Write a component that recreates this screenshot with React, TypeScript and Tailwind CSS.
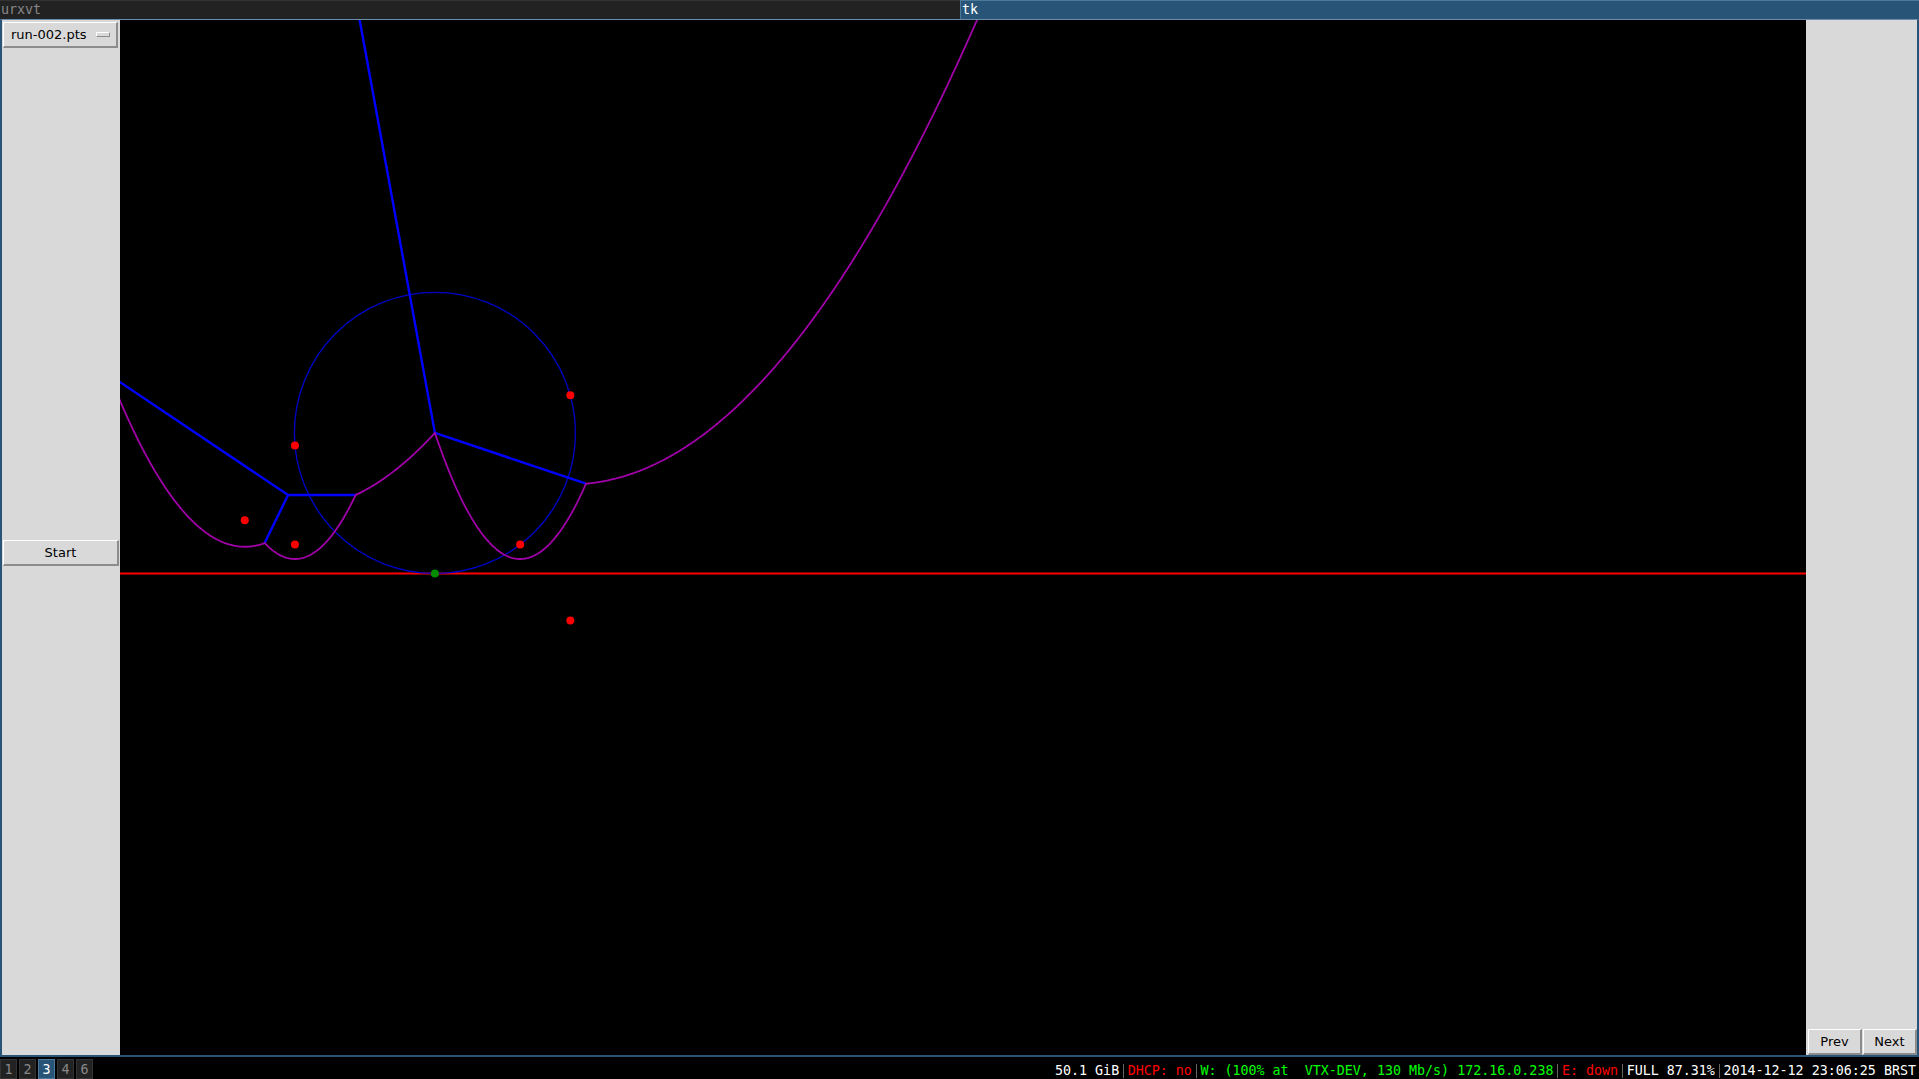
type P = [number, number];

// reference was measured on a 1568px wide copy
const K = 1919 / 1568;
const CX = 120;
const CY = 20;
const CW = 1686;
const CH = 1035;

const pt = (x: number, y: number): P => [x * K - CX, y * K - CY];

const A = pt(241, 364);
const B = pt(425, 445);
const C = pt(466, 323);
const D = pt(241, 445);
const E = pt(200, 425);
const F = pt(466, 507);

const sites = [A, B, C, D, E, F];
const done = [A, B, C, D, E];

function circumcenter(a: P, b: P, c: P): P {
  const d = 2 * (a[0] * (b[1] - c[1]) + b[0] * (c[1] - a[1]) + c[0] * (a[1] - b[1]));
  const a2 = a[0] ** 2 + a[1] ** 2;
  const b2 = b[0] ** 2 + b[1] ** 2;
  const c2 = c[0] ** 2 + c[1] ** 2;
  return [
    (a2 * (b[1] - c[1]) + b2 * (c[1] - a[1]) + c2 * (a[1] - b[1])) / d,
    (a2 * (c[0] - b[0]) + b2 * (a[0] - c[0]) + c2 * (b[0] - a[0])) / d,
  ];
}

const V = circumcenter(A, B, C);
const R = Math.hypot(A[0] - V[0], A[1] - V[1]);
const L = V[1] + R; // sweep line
const W = circumcenter(A, E, D);

const arc = (s: P, x: number) => (L + s[1]) / 2 - (x - s[0]) ** 2 / (2 * (L - s[1]));
const beach = (x: number) => Math.max(...done.map((s) => arc(s, x)));

function breakpoint(s: P, t: P, lo: number, hi: number): P {
  const f = (x: number) => arc(s, x) - arc(t, x);
  const flo = f(lo);
  for (let i = 0; i < 60; i++) {
    const m = (lo + hi) / 2;
    if (f(m) * flo > 0) lo = m;
    else hi = m;
  }
  return [lo, arc(s, lo)];
}

const bpBC = breakpoint(B, C, 455 * K - CX, 520 * K - CX);
const bpDA = breakpoint(D, A, 260 * K - CX, 320 * K - CX);
const bpED = breakpoint(E, D, 205 * K - CX, 232 * K - CX);

// half line along the bisector of s and t, going upward
function ray(from: P, s: P, t: P): P {
  const dx = t[0] - s[0];
  const dy = t[1] - s[1];
  let v: P = [-dy, dx];
  if (v[1] > 0) v = [dy, -dx];
  const n = Math.hypot(v[0], v[1]);
  return [from[0] + (v[0] / n) * 2000, from[1] + (v[1] / n) * 2000];
}

const edges: [P, P][] = [
  [V, ray(V, A, C)],
  [V, bpBC],
  [W, ray(W, A, E)],
  [W, bpDA],
  [W, bpED],
];

const beachXs: number[] = [];
for (let x = -20; x <= 1000; x += 1) beachXs.push(x);
beachXs.push(V[0], bpBC[0], bpDA[0], bpED[0]);
beachXs.sort((a, b) => a - b);
const beachPts = beachXs.map((x) => `${x.toFixed(2)},${beach(x).toFixed(2)}`).join(" ");

const Canvas = () => (
  <div className="h-full w-[1686px] shrink-0 overflow-hidden bg-black">
    <svg width={CW} height={CH} viewBox={`0 0 ${CW} ${CH}`} className="block">
      <line x1={0} y1={L} x2={CW} y2={L} stroke="#ff0000" strokeWidth={2} />
      <circle cx={V[0]} cy={V[1]} r={R} fill="none" stroke="#0000c8" strokeWidth={1.3} />
      {edges.map(([p, q], i) => (
        <line key={i} x1={p[0]} y1={p[1]} x2={q[0]} y2={q[1]} stroke="#0000ff" strokeWidth={2.4} />
      ))}
      <polyline points={beachPts} fill="none" stroke="#a000a8" strokeWidth={1.8} />
      {sites.map(([x, y], i) => (
        <circle key={i} cx={x} cy={y} r={4} fill="#ff0000" />
      ))}
      <circle cx={V[0]} cy={L} r={4} fill="#008c00" />
    </svg>
  </div>
);

const raised = "border-t border-l border-t-white border-l-white border-b-2 border-r-2 border-b-[#8c8c8c] border-r-[#8c8c8c]";
const raisedThin = "border border-t-white border-l-white border-b-[#8c8c8c] border-r-[#8c8c8c]";

const TkButton = ({ label, className }: { label: string; className: string }) => (
  <div className={`flex items-center justify-center bg-[#d9d9d9] text-[13px] text-black ${raised} ${className}`}>
    {label}
  </div>
);

const LeftPanel = () => (
  <div className="flex w-[118px] shrink-0 flex-col bg-[#d9d9d9] font-['DejaVu_Sans',sans-serif]">
    <div className={`ml-[1px] mt-[2px] flex h-[26px] w-[115px] items-center justify-between pl-[7px] pr-[6px] text-[13px] text-black ${raised}`}>
      <span>run-002.pts</span>
      <span className={`h-[5px] w-[14px] ${raisedThin}`} />
    </div>
    <TkButton label="Start" className="ml-[1px] mt-[492px] h-[26px] w-[116px]" />
  </div>
);

const RightPanel = () => (
  <div className="flex w-[111px] shrink-0 flex-col justify-end bg-[#d9d9d9] font-['DejaVu_Sans',sans-serif]">
    <div className="flex gap-[1px] pl-[2px]">
      <TkButton label="Prev" className="h-[26px] w-[54px]" />
      <TkButton label="Next" className="h-[26px] w-[54px]" />
    </div>
  </div>
);

const TabBar = () => (
  <div className="flex h-[19px] text-[13.33px] leading-[18px]">
    <div className="w-[960px] border-t border-[#333333] bg-[#222222] pl-[1px] text-[#888888]">urxvt</div>
    <div className="flex-1 border-l border-t border-[#4c7899] bg-[#285577] pl-[1px] text-white">tk</div>
  </div>
);

const status: { text: string; color: string }[] = [
  { text: "50.1 GiB", color: "text-white" },
  { text: "DHCP: no", color: "text-[#ff0000]" },
  { text: "W: (100% at  VTX-DEV, 130 Mb/s) 172.16.0.238", color: "text-[#00ff00]" },
  { text: "E: down", color: "text-[#ff0000]" },
  { text: "FULL 87.31%", color: "text-white" },
  { text: "2014-12-12 23:06:25 BRST", color: "text-white" },
];

const StatusBar = () => (
  <div className="flex h-[22px] items-end justify-between bg-black text-[13.33px]">
    <div className="flex gap-[2px]">
      {["1", "2", "3", "4", "6"].map((n) => (
        <div
          key={n}
          className={`flex h-[20px] w-[17px] items-center justify-center border pt-[1px] ${
            n === "3" ? "border-[#4c7899] bg-[#285577] text-white" : "border-[#333333] bg-[#222222] text-[#888888]"
          }`}
        >
          {n}
        </div>
      ))}
    </div>
    <div className="flex h-[16px] items-center pr-[3px] leading-[16px]">
      {status.map((s, i) => (
        <div key={i} className="flex items-center">
          {i > 0 && (
            <span className="flex w-[8.5px] justify-center">
              <span className="h-[14px] w-[1px] bg-[#666666]" />
            </span>
          )}
          <span className={`whitespace-pre ${s.color}`}>{s.text}</span>
        </div>
      ))}
    </div>
  </div>
);

export default function App() {
  return (
    <div className="flex h-[1079px] w-[1919px] flex-col overflow-hidden bg-black font-['DejaVu_Sans_Mono',monospace]">
      <TabBar />
      <div className="flex h-[1038px] border-x-2 border-b-2 border-t border-x-[#285577] border-b-[#285577] border-t-[#6b8cab]">
        <LeftPanel />
        <Canvas />
        <RightPanel />
      </div>
      <StatusBar />
    </div>
  );
}
